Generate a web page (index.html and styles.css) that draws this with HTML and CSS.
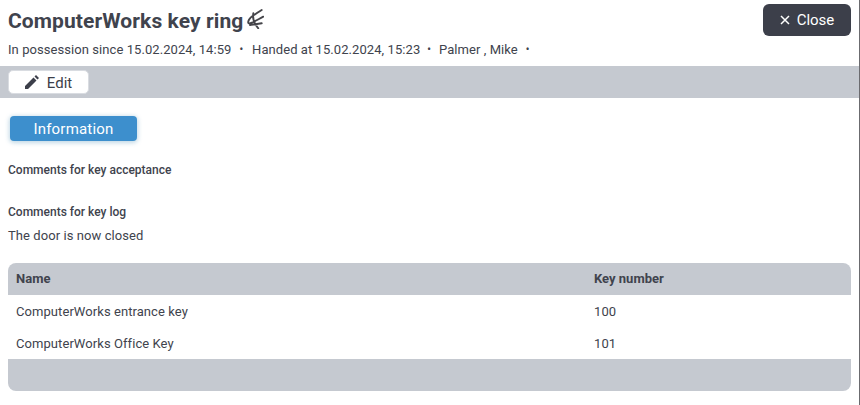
FILE: index.html
```html
<!DOCTYPE html>
<html lang="en">
<head>
<meta charset="utf-8">
<title>ComputerWorks key ring</title>
<link rel="stylesheet" href="styles.css">
</head>
<body>
<header class="head">
  <div class="head-text">
    <h1 class="title">ComputerWorks key ring
      <svg class="sig" viewBox="0 0 18 20" width="18" height="20"><path d="M15.700 1 C11 4 6 7 4 9.300 C2.500 11 1.500 14 2.800 14.300 C5 14.800 11 11 17.300 7.700 M7.300 4.300 C6.500 9 8.500 15 12.300 19.300 M4 16 C7.500 15.500 12 15 15.700 14.300" fill="none" stroke="#45454a" stroke-width="1.900" stroke-linecap="round"/></svg>
    </h1>
    <p class="meta"><span>In possession since 15.02.2024, 14:59</span><i>•</i><span class="handed">Handed at 15.02.2024, 15:23</span><i>•</i><span>Palmer , Mike</span><i>•</i></p>
  </div>
  <button class="close"><svg viewBox="0 0 10 10" width="10" height="10"><path d="M1 1 9 9 M9 1 1 9" stroke="#fff" stroke-width="1.500"/></svg>Close</button>
</header>
<div class="toolbar">
  <button class="edit"><svg viewBox="0 0 14 14" width="14" height="14"><path d="M0 14 V11 L8.500 2.500 L11.500 5.500 L3 14 Z M9.500 1.500 L11 0 L14 3 L12.500 4.500 Z" fill="#3c3f4a"/></svg><span class="edit-label">Edit</span></button>
</div>
<main class="content">
  <button class="tab">Information</button>
  <h2 class="label first">Comments for key acceptance</h2>
  <h2 class="label second">Comments for key log</h2>
  <p class="text">The door is now closed</p>
  <div class="table">
    <div class="row th"><span class="c1">Name</span><span>Key number</span></div>
    <div class="row"><span class="c1">ComputerWorks entrance key</span><span>100</span></div>
    <div class="row"><span class="c1">ComputerWorks Office Key</span><span>101</span></div>
    <div class="tfoot"></div>
  </div>
</main>
</body>
</html>
```
FILE: styles.css
```css
* { box-sizing: border-box; }
html, body { margin: 0; height: 100%; overflow: hidden; }
body { background: #fff; color: #40434d; font-family: Roboto, "Liberation Sans", sans-serif; font-size: 13px; letter-spacing: .07px; width: 860px; border-right: 1px solid #6b6b6f; }
.head { display: flex; justify-content: space-between; height: 66px; padding: 4px 8px 0; }
.title { margin: 0; font-size: 21px; letter-spacing: .09px; line-height: 34px; font-weight: 700; display: flex; align-items: center; gap: 3px; white-space: nowrap; }
.sig { margin-top: -4px; }
.meta { margin: 3px 0 0; line-height: 18px; display: flex; }
.meta i { font-style: normal; margin: 0 8px; font-size: 10px; font-weight: 700; }
.handed { margin-left: 1px; margin-right: -1px; }
.close { height: 32px; width: 88px; background: #3c3f4a; color: #fff; border: 0; border-radius: 6px; font: 15px Roboto, sans-serif; display: flex; align-items: center; justify-content: center; gap: 7px; }
.toolbar { height: 32px; background: #c5c9d0; padding: 4px 8px; }
.edit { width: 81px; height: 24px; background: #fff; border: 1px solid #d9dce1; border-radius: 5px; font: 15px Roboto, sans-serif; color: #3c3f4a; display: flex; align-items: center; justify-content: center; gap: 8px; padding: 0; }
.edit-label { padding-top: 1px; }
.content { padding: 18px 8px 0; }
.tab { display: block; margin-left: 2px; width: 127px; height: 25px; background: #3d8fcd; color: #fff; border: 0; border-radius: 4px; font: 15px Roboto, sans-serif; letter-spacing: .2px; box-shadow: 0 1px 4px 1px rgba(120,170,200,.45); }
.label { margin: 0; font-size: 12px; font-weight: 500; line-height: 16px; letter-spacing: 0; }
.first { margin-top: 21px; }
.second { margin-top: 26px; }
.text { margin: 8px 0 0; line-height: 16px; }
.table { margin-top: 19px; width: 843px; }
.row { display: flex; height: 32px; align-items: center; padding-left: 8px; }
.c1 { width: 578px; }
.th { background: #c5c9d0; font-weight: 700; letter-spacing: 0; border-radius: 8px 8px 0 0; padding-bottom: 2px; }
.tfoot { height: 32px; background: #c5c9d0; border-radius: 0 0 8px 8px; }
```
